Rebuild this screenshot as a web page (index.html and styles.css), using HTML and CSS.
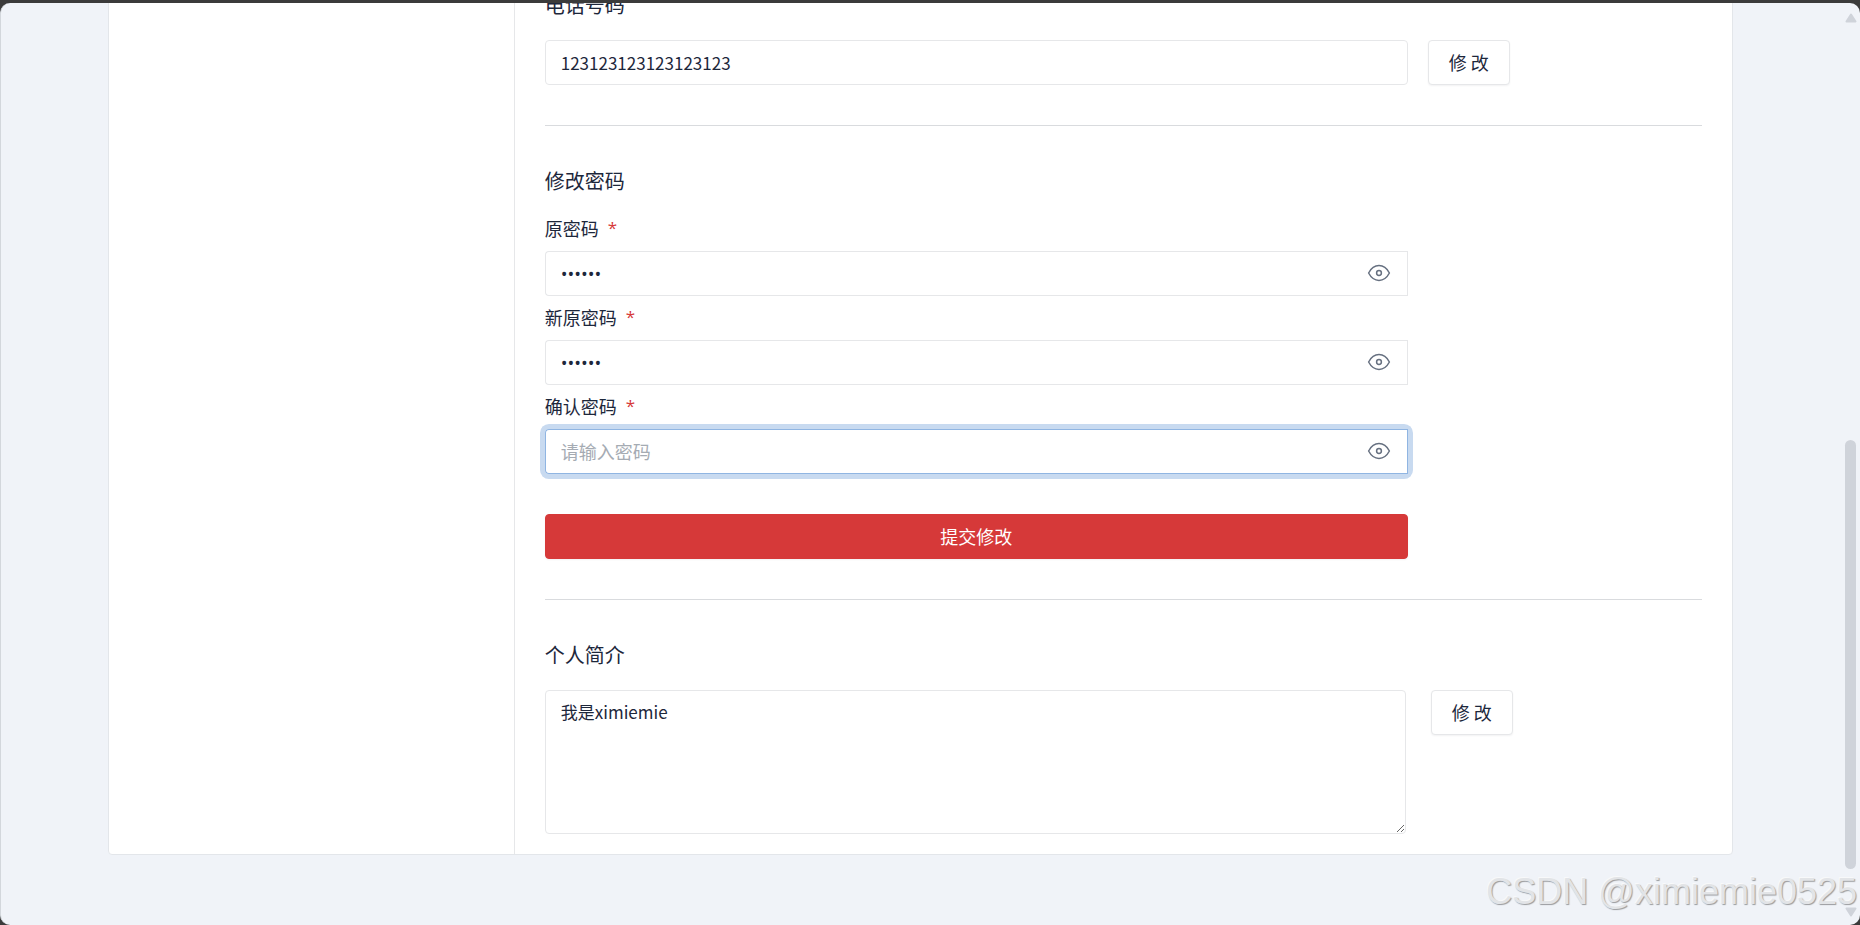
FILE: index.html
```html
<!DOCTYPE html>
<html lang="zh-CN">
<head>
<meta charset="utf-8">
<title>个人设置</title>
<link rel="stylesheet" href="styles.css">
</head>
<body>
<svg class="sprite" aria-hidden="true">
  <symbol id="eye" viewBox="0 0 24 24">
    <circle cx="12" cy="12" r="2.4"/>
    <path d="M1.6 12C4.2 7.1 7.700 4.600 12 4.600S19.800 7.100 22.400 12C19.800 16.900 16.300 19.400 12 19.400S4.200 16.900 1.600 12Z"/>
  </symbol>
</svg>
<div class="window">
  <main class="page">
    <div class="card">
      <aside class="sidebar"></aside>
      <div class="content">
        <section>
          <h2 class="title"><label for="phone">电话号码</label></h2>
          <div class="row">
            <input class="control" id="phone" type="text" value="123123123123123123">
            <button class="btn" type="button">修 改</button>
          </div>
        </section>
        <hr class="divider">
        <section>
          <h2 class="title">修改密码</h2>
          <form class="form">
            <label class="label" for="old-password">原密码 <span class="required">*</span></label>
            <div class="password">
              <input class="password-input" id="old-password" type="password" value="123456">
              <button class="toggle" type="button" aria-label="显示密码"><svg class="icon"><use href="#eye"/></svg></button>
            </div>
            <label class="label" for="new-password">新原密码 <span class="required">*</span></label>
            <div class="password">
              <input class="password-input" id="new-password" type="password" value="123456">
              <button class="toggle" type="button" aria-label="显示密码"><svg class="icon"><use href="#eye"/></svg></button>
            </div>
            <label class="label" for="confirm-password">确认密码 <span class="required">*</span></label>
            <div class="password focused">
              <input class="password-input" id="confirm-password" type="password" placeholder="请输入密码">
              <button class="toggle" type="button" aria-label="显示密码"><svg class="icon"><use href="#eye"/></svg></button>
            </div>
            <button class="btn submit" type="button">提交修改</button>
          </form>
        </section>
        <hr class="divider">
        <section>
          <h2 class="title"><label for="bio">个人简介</label></h2>
          <div class="row bio-row">
            <textarea class="control bio" id="bio">我是ximiemie</textarea>
            <button class="btn" type="button">修 改</button>
          </div>
        </section>
      </div>
    </div>
  </main>
  <div class="scrollbar" aria-hidden="true">
    <svg class="arrow" viewBox="0 0 12 10"><path d="M6 1.500L10.500 8.500H1.500Z"/></svg>
    <div class="track"><div class="thumb"></div></div>
    <svg class="arrow" viewBox="0 0 12 10"><path d="M6 8.500L10.500 1.500H1.500Z"/></svg>
  </div>
  <div class="watermark">CSDN @ximiemie0525</div>
</div>
</body>
</html>
```
FILE: styles.css
```css
* {
  box-sizing: border-box;
}

body {
  margin: 0;
  padding-top: 3px;
  height: 100vh;
  background: #3b3b3b;
  color: #1d273b;
  font-family: "Noto Sans CJK SC", sans-serif;
  font-size: 18px;
}

.sprite {
  display: none;
}

.window {
  position: relative;
  display: flex;
  height: 100%;
  overflow: hidden;
  border-left: 1px solid #d3d7dc;
  border-radius: 10px;
  background: #f0f3f8;
}

.page {
  flex: 1;
  min-width: 0;
  padding: 0 112px 0 107px;
}

/* The view is scrolled, so the card starts above the window edge. */
.card {
  display: flex;
  margin-top: -10px;
  border: 1px solid #e3e6ea;
  border-radius: 4px;
  background: #fff;
}

.sidebar {
  flex: 0 0 25%;
  border-right: 1px solid #e6e7e9;
}

.content {
  flex: 1;
  min-width: 0;
  padding: 0 30px 20px;
}

.title {
  margin: 0 0 24px;
  font-size: 20px;
  font-weight: 400;
  line-height: 22px;
}

.row {
  display: grid;
  grid-template-columns: calc(75% - 5px) auto;
  justify-content: start;
  align-items: start;
  gap: 20px;
}

.bio-row {
  grid-template-columns: calc(75% - 7px) auto;
  gap: 25px;
}

.control {
  width: 100%;
  height: 45px;
  padding: 0 15px;
  border: 1px solid #e6e7e9;
  border-radius: 4px;
  background: #fff;
  color: inherit;
  font-family: inherit;
  font-size: 17px;
  outline: none;
}

.bio {
  display: block;
  height: 144px;
  padding: 8px 15px;
  line-height: 26px;
  resize: vertical;
}

.btn {
  height: 45px;
  padding: 0 20px 2px;
  border: 1px solid #e6e7e9;
  border-radius: 4px;
  background: #fff;
  box-shadow: 0 1px 2px rgba(29, 39, 59, 0.06);
  color: inherit;
  font-family: inherit;
  font-size: 18px;
  line-height: 26px;
  white-space: nowrap;
}

.divider {
  height: 1px;
  margin: 40px 0 44px;
  border: 0;
  background: #d9dbde;
}

.form {
  width: calc(75% - 5px);
}

.label {
  display: flex;
  gap: 9px;
  margin-bottom: 11px;
  line-height: 24px;
}

.required {
  color: #d63939;
  font-family: "Open Sans", sans-serif;
  font-size: 17px;
}

.password {
  display: flex;
  height: 45px;
  margin-bottom: 9px;
  border-radius: 4px;
}

.password.focused {
  margin-bottom: 40px;
  box-shadow: 0 0 0 5px #c8daf0;
}

.password-input {
  flex: 1;
  min-width: 0;
  padding: 0 15px;
  border: 1px solid #e6e7e9;
  border-right: 0;
  border-radius: 4px 0 0 4px;
  background: #fff;
  color: inherit;
  font-family: "Open Sans", "Noto Sans CJK SC", sans-serif;
  font-size: 18px;
  outline: none;
}

.password-input::placeholder {
  color: #a5abb3;
  opacity: 1;
}

.toggle {
  display: flex;
  align-items: center;
  padding: 0 16px 2px;
  border: 1px solid #e6e7e9;
  border-left: 0;
  background: #fff;
  color: #667080;
}

.focused .password-input,
.focused .toggle {
  border-color: #90b5e2;
}

.icon {
  width: 24px;
  height: 24px;
  fill: none;
  stroke: currentColor;
  stroke-width: 1.5;
  stroke-linejoin: round;
}

.submit {
  display: block;
  width: 100%;
  border-color: #d63939;
  background: #d63939;
  color: #fff;
}

.scrollbar {
  display: flex;
  flex-direction: column;
  gap: 4px;
  width: 15px;
  padding: 10px 3px 8px 0;
}

.arrow {
  flex: none;
  width: 12px;
  height: 10px;
  fill: #cfd3da;
  stroke: #cfd3da;
  stroke-width: 2;
  stroke-linejoin: round;
}

.track {
  display: flex;
  flex: 1;
  flex-direction: column;
  justify-content: flex-end;
  padding-bottom: 34px;
}

.thumb {
  width: 11px;
  height: 51%;
  border-radius: 6px;
  background: #cfd3da;
}

.watermark {
  position: absolute;
  right: 3px;
  bottom: 13px;
  color: #e2e4e7;
  font-family: "Liberation Sans", sans-serif;
  font-size: 36px;
  line-height: 40px;
  text-shadow: 1px 1px 1px #999b9e, -1px -1px 0 #f8f9fa;
  white-space: nowrap;
}
```
